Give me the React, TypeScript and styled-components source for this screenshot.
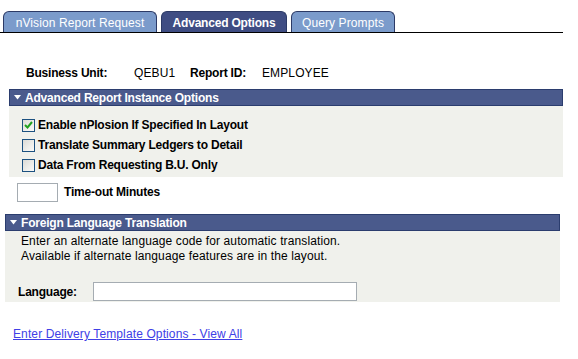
import React from "react";
import styled, { createGlobalStyle } from "styled-components";

const Global = createGlobalStyle`
  html, body { margin: 0; padding: 0; background: #fff; }
  body { font-family: Arial, "Liberation Sans", sans-serif; font-size: 12px; color: #000; letter-spacing: 0.12px; }
`;

const Page = styled.div`
  width: 578px;
  height: 359px;
  padding-top: 10px;
  box-sizing: border-box;
  overflow: hidden;
`;

const TabBar = styled.div`
  display: flex;
  align-items: flex-end;
  gap: 4px;
  padding-left: 3px;
  width: 560px;
  border-bottom: 1px solid #000;
  height: 22px;
`;

const Tab = styled.div<{ $active?: boolean; $width: number }>`
  box-sizing: border-box;
  height: 21px;
  width: ${(p) => p.$width}px;
  display: flex;
  align-items: center;
  justify-content: center;
  background: ${(p) => (p.$active ? "#3f4d83" : "#7b9bcb")};
  color: #fff;
  font-weight: ${(p) => (p.$active ? "bold" : "normal")};
  letter-spacing: ${(p) => (p.$active ? "-0.2px" : "0.1px")};
  font-size: 12px;
  border: 1px solid #2c3a66;
  border-bottom: none;
  border-radius: 6px 6px 0 0;
  padding-top: 1px;
`;

const InfoRow = styled.div`
  display: flex;
  align-items: baseline;
  padding-left: 26px;
  margin-top: 33px;
  height: 14px;
`;

const Label = styled.span<{ $w?: number }>`
  font-weight: bold;
  letter-spacing: -0.2px;
  display: inline-block;
  width: ${(p) => (p.$w ? `${p.$w}px` : "auto")};
`;

const Value = styled.span<{ $w?: number }>`
  display: inline-block;
  width: ${(p) => (p.$w ? `${p.$w}px` : "auto")};
`;

const Section = styled.div<{ $left: number; $width: number; $mt: number; $h: number }>`
  margin-left: ${(p) => p.$left}px;
  width: ${(p) => p.$width}px;
  margin-top: ${(p) => p.$mt}px;
  background: #f0f1ec;
  height: ${(p) => p.$h}px;
  box-sizing: border-box;
`;

const SectionHeader = styled.div`
  box-sizing: border-box;
  height: 17px;
  background: #4a5a8c;
  border: 1px solid #2b3d6e;
  color: #fff;
  font-weight: bold;
  letter-spacing: -0.2px;
  font-size: 12px;
  display: flex;
  align-items: center;
  padding-left: 4px;
  gap: 4px;
`;

const Arrow = styled.svg`
  width: 7px;
  height: 5px;
  flex: none;
`;

const CheckList = styled.div`
  display: flex;
  flex-direction: column;
  gap: 6px;
  padding: 12px 0 0 13px;
`;

const CheckRow = styled.label`
  display: flex;
  align-items: center;
  gap: 3px;
  font-weight: bold;
  letter-spacing: -0.2px;
  height: 14px;
`;

const Box = styled.span`
  width: 13px;
  height: 13px;
  box-sizing: border-box;
  border: 1px solid #1c5180;
  background: linear-gradient(135deg, #dcdcd7 0%, #fbfbf9 100%);
  display: inline-flex;
  align-items: center;
  justify-content: center;
`;

const TimeoutRow = styled.div`
  display: flex;
  align-items: center;
  padding-left: 17px;
  margin-top: 6px;
  gap: 6px;
  height: 18px;
`;

const TextInput = styled.div<{ $w: number }>`
  box-sizing: border-box;
  width: ${(p) => p.$w}px;
  height: 19px;
  border: 1px solid #a5acb2;
  background: #fff;
`;

const Desc = styled.div`
  padding: 3px 0 0 16px;
  line-height: 15px;
`;

const LangRow = styled.div`
  display: flex;
  align-items: center;
  padding-left: 13px;
  margin-top: 18px;
`;

const Link = styled.a`
  display: inline-block;
  margin-left: 13px;
  margin-top: 25px;
  color: #4040e6;
  text-decoration: underline;
  font-size: 12px;
`;

const ArrowIcon = () => (
  <Arrow viewBox="0 0 7 5">
    <polygon points="0,0 7,0 3.5,4.5" fill="#fff" />
  </Arrow>
);

const Check = () => (
  <svg width="9" height="8" viewBox="0 0 9 8">
    <path d="M1 4 L3.5 6.5 L8 1" stroke="#21a121" strokeWidth="2" fill="none" />
  </svg>
);

export default function App() {
  return (
    <Page>
      <Global />
      <TabBar>
        <Tab $width={154}>nVision Report Request</Tab>
        <Tab $active $width={126}>Advanced Options</Tab>
        <Tab $width={104}>Query Prompts</Tab>
      </TabBar>
      <InfoRow>
        <Label $w={108}>Business Unit:</Label>
        <Value $w={56}>QEBU1</Value>
        <Label $w={72}>Report ID:</Label>
        <Value>EMPLOYEE</Value>
      </InfoRow>
      <Section $left={9} $width={554} $mt={9} $h={88}>
        <SectionHeader>
          <ArrowIcon />
          Advanced Report Instance Options
        </SectionHeader>
        <CheckList>
          <CheckRow>
            <Box>
              <Check />
            </Box>
            Enable nPlosion If Specified In Layout
          </CheckRow>
          <CheckRow>
            <Box />
            Translate Summary Ledgers to Detail
          </CheckRow>
          <CheckRow>
            <Box />
            Data From Requesting B.U. Only
          </CheckRow>
        </CheckList>
      </Section>
      <TimeoutRow>
        <TextInput $w={41} />
        <Label>Time-out Minutes</Label>
      </TimeoutRow>
      <Section $left={5} $width={555} $mt={13} $h={88}>
        <SectionHeader>
          <ArrowIcon />
          Foreign Language Translation
        </SectionHeader>
        <Desc>
          Enter an alternate language code for automatic translation.
          <br />
          Available if alternate language features are in the layout.
        </Desc>
        <LangRow>
          <Label $w={75}>Language:</Label>
          <TextInput $w={264} />
        </LangRow>
      </Section>
      <Link href="#">Enter Delivery Template Options - View All</Link>
    </Page>
  );
}
